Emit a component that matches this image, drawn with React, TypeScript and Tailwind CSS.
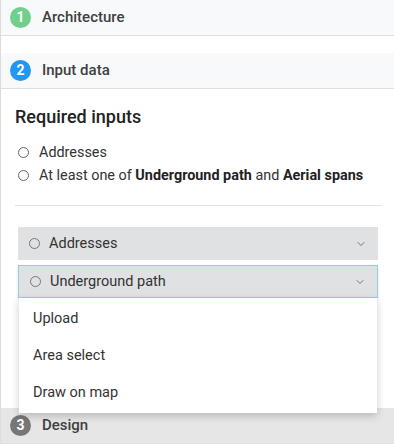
import { ChevronDown } from "lucide-react";

function StepHeader({ n, label, badge, bg }: { n: number; label: string; badge: string; bg: string }) {
  return (
    <div className={`h-[36px] flex items-center gap-[11px] pl-[9px] border-b border-[#dedfe0] ${bg}`}>
      <div className={`w-[21px] h-[21px] rounded-full flex items-center justify-center text-white text-[14px] font-bold ${badge}`}>
        {n}
      </div>
      <span className="text-[15px] font-medium text-[#404040]">{label}</span>
    </div>
  );
}

function Radio() {
  return <span className="w-[11px] h-[11px] rounded-full border border-[#666] shrink-0" />;
}

function Select({ label, active }: { label: string; active?: boolean }) {
  return (
    <div
      className={`h-[33px] flex items-center pl-[11px] pr-[11px] bg-[#e0e1e2] ${
        active ? "border border-[#94cde0] shadow-[0_2px_3px_rgba(0,0,0,0.12)]" : ""
      }`}
    >
      <span className="w-[11px] h-[11px] rounded-full border border-[#777] shrink-0" />
      <span className="ml-[9px] text-[14.5px] text-[#333]">{label}</span>
      <ChevronDown className="ml-auto text-[#777]" size={12} strokeWidth={2} />
    </div>
  );
}

export default function App() {
  return (
    <div className="w-[394px] h-[444px] overflow-hidden bg-white border-l border-[#dcdcdc] font-['Roboto',sans-serif]">
      <StepHeader n={1} label="Architecture" badge="bg-[#6fcf8b]" bg="bg-[#f8f9fa]" />
      <div className="h-[17px]" />
      <StepHeader n={2} label="Input data" badge="bg-[#2196f3]" bg="bg-[#f8f9fa]" />

      <div className="h-[319px] pl-[14px] pr-[13px] pt-[16px]">
        <h2 className="text-[18px] leading-[24px] font-medium text-[#222]">Required inputs</h2>
        <ul className="mt-[12px] flex flex-col">
          <li className="h-[23px] flex items-center gap-[10px] pl-[3px] text-[14.4px] text-[#333]">
            <Radio />
            Addresses
          </li>
          <li className="h-[23px] flex items-center gap-[10px] pl-[3px] text-[14.4px] text-[#333]">
            <Radio />
            <span>
              At least one of <b className="font-bold text-[#222]">Underground path</b> and{" "}
              <b className="font-bold text-[#222]">Aerial spans</b>
            </span>
          </li>
        </ul>
        <div className="mt-[18px] border-t border-[#e2e2e2]" />

        <div className="mx-[3px] mt-[21px] flex flex-col gap-[5px]">
          <Select label="Addresses" />
          <div className="relative">
            <Select label="Underground path" active />
            <div className="absolute left-px right-px top-full z-10 bg-white shadow-[0_3px_8px_rgba(0,0,0,0.2)] py-[2px]">
              {["Upload", "Area select", "Draw on map"].map((t) => (
                <div key={t} className="h-[37px] flex items-center pl-[14px] text-[14.5px] text-[#333]">
                  {t}
                </div>
              ))}
            </div>
          </div>
        </div>
      </div>

      <StepHeader n={3} label="Design" badge="bg-[#777]" bg="bg-[#e6e6e6]" />
    </div>
  );
}
